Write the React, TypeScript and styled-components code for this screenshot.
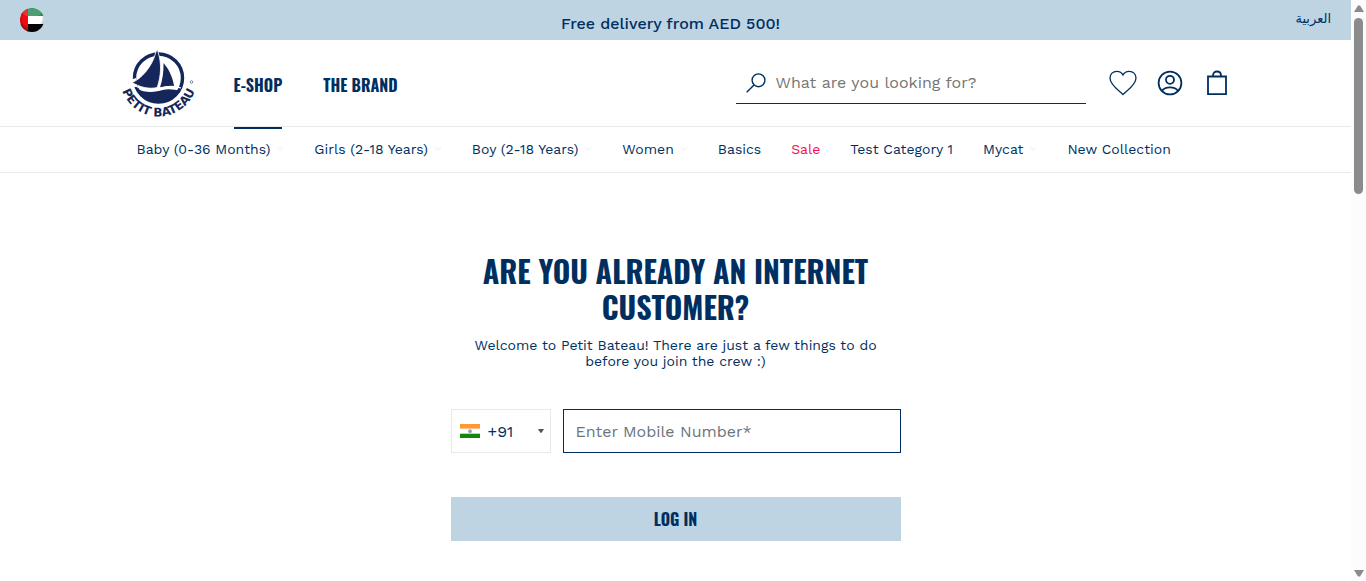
import React from "react";
import styled, { createGlobalStyle } from "styled-components";

const navy = "#002f5f";
const sky = "#bed4e3";
const line = "#e9e9e9";
const body = '"Work Sans", "Noto Sans", "Liberation Sans", sans-serif';
const display = '"Oswald", "Liberation Sans Narrow", "DejaVu Sans Condensed", sans-serif';

const GlobalStyle = createGlobalStyle`
  *, *::before, *::after { box-sizing: border-box; }
  body { margin: 0; background: #fff; color: ${navy}; font-family: ${body}; }
  h1, p, ul { margin: 0; padding: 0; }
  a { color: inherit; text-decoration: none; }
  button, input, select { font: inherit; color: inherit; }
`;

const Shell = styled.div`
  display: flex;
  height: 100vh;
  overflow: hidden;
`;

const Page = styled.div`
  flex: 1;
  min-width: 0;
`;

const TopBar = styled.div`
  display: grid;
  grid-template-columns: 1fr auto 1fr;
  align-items: center;
  height: 40px;
  padding: 0 20px;
  background: ${sky};
`;

const IconButton = styled.button`
  display: flex;
  justify-content: center;
  min-width: 28px;
  padding: 0;
  border: 0;
  background: none;
  cursor: pointer;
`;

const CountryButton = styled(IconButton)`
  justify-self: start;
  justify-content: flex-start;
`;

const Promo = styled.p`
  padding: 8px 10px 0 0;
  font-size: 16px;
  font-weight: 500;
  line-height: 24px;
`;

const Language = styled.a`
  justify-self: end;
  padding-bottom: 2px;
  font: 13px/20px "Liberation Serif", "DejaVu Sans", serif;
`;

const Container = styled.div`
  display: flex;
  width: 100%;
  max-width: 1110px;
  margin: 0 auto;
`;

const Header = styled.header`
  border-bottom: 1px solid ${line};
`;

const HeaderRow = styled(Container)`
  height: 86px;
  align-items: center;
`;

const LogoLink = styled.a`
  display: flex;
`;

const MainNav = styled.nav`
  display: flex;
  flex: 1;
  gap: 41px;
  align-self: flex-start;
  margin-left: 37px;
`;

const MainLink = styled.a<{ $active?: boolean }>`
  height: 89px;
  padding-top: 33px;
  border-bottom: 2px solid ${(p) => (p.$active ? navy : "transparent")};
  font: 700 16px/24px ${display};
`;

const Search = styled.label`
  display: flex;
  align-items: center;
  gap: 10px;
  width: 350px;
  height: 42px;
  padding-left: 10px;
  border-bottom: 1px solid ${navy};
`;

const SearchInput = styled.input`
  flex: 1;
  min-width: 0;
  padding: 0;
  border: 0;
  outline: 0;
  background: none;
  font-size: 16px;
  &::placeholder { color: #757575; opacity: 1; }
`;

const Actions = styled.div`
  display: flex;
  align-items: center;
  gap: 19px;
  margin-left: 23px;
`;

const CategoryBar = styled.nav`
  border-bottom: 1px solid ${line};
`;

const CategoryList = styled.ul`
  display: flex;
  width: 100%;
  max-width: 1078px;
  height: 45px;
  margin: 0 auto;
  padding-bottom: 2px;
  align-items: center;
  gap: 30px;
  list-style: none;
`;

const CategoryLink = styled.a<{ $sale?: boolean }>`
  display: flex;
  align-items: center;
  gap: 6px;
  color: ${(p) => (p.$sale ? "#f0134d" : navy)};
  font-size: 14px;
  line-height: 20px;
  white-space: nowrap;
`;

const Login = styled.main`
  width: 450px;
  max-width: 100%;
  margin: 0 auto;
  padding-top: 80px;
  text-align: center;
`;

const Title = styled.h1`
  font: 700 30px/36px ${display};
`;

const Intro = styled.p`
  padding: 12px 16px 0;
  font-size: 14px;
  line-height: 16px;
`;

const PhoneRow = styled.div`
  display: flex;
  gap: 12px;
  margin: 40px 0 44px;
`;

const CodeBox = styled.label`
  display: flex;
  align-items: center;
  width: 100px;
  height: 44px;
  padding: 0 6px 0 8px;
  border: 1px solid ${line};
`;

const CodeSelect = styled.select`
  flex: 1;
  min-width: 0;
  padding: 0 0 0 8px;
  border: 0;
  outline: 0;
  appearance: none;
  background: none;
  font-size: 16px;
`;

const PhoneInput = styled.input`
  flex: 1;
  min-width: 0;
  height: 44px;
  padding: 0 12px;
  border: 1px solid ${navy};
  border-radius: 0;
  outline: 0;
  font-size: 16px;
  &::placeholder { color: #6c757d; opacity: 1; }
`;

const Submit = styled.button`
  width: 100%;
  height: 44px;
  border: 0;
  background: ${sky};
  font: 700 16px/24px ${display};
  cursor: pointer;
`;

const ScrollTrack = styled.div`
  display: flex;
  flex-direction: column;
  align-items: center;
  width: 15px;
  padding: 5px 0 4px;
  background: #fcfcfc;
`;

const ScrollThumb = styled.div`
  width: 9px;
  height: 176px;
  margin: 6px 0 auto;
  border-radius: 5px;
  background: #8b8b8b;
`;

const categories = [
  { name: "Baby (0-36 Months)", menu: true },
  { name: "Girls (2-18 Years)", menu: true },
  { name: "Boy (2-18 Years)", menu: true },
  { name: "Women", menu: true },
  { name: "Basics" },
  { name: "Sale", sale: true },
  { name: "Test Category 1" },
  { name: "Mycat", menu: true },
  { name: "New Collection" },
];

const UaeFlag = () => (
  <svg width="24" height="24" viewBox="0 0 24 24" aria-hidden="true">
    <defs>
      <clipPath id="uae"><circle cx="12" cy="12" r="12" /></clipPath>
      <radialGradient id="gloss" cx=".5" cy=".4" r=".62">
        <stop offset=".65" stopColor="#000" stopOpacity="0" />
        <stop offset="1" stopColor="#000" stopOpacity=".45" />
      </radialGradient>
    </defs>
    <g clipPath="url(#uae)">
      <path fill="#fff" d="M0 0h24v24H0z" />
      <path fill="#2f8f5b" d="M0 0h24v8H0z" />
      <path fill="#050505" d="M0 16h24v8H0z" />
      <path fill="#ee0c12" d="M0 0h8v24H0z" />
      <path fill="url(#gloss)" d="M0 0h24v24H0z" />
      <ellipse cx="12" cy="5" rx="9" ry="4" fill="#fff" opacity=".15" />
    </g>
  </svg>
);

const Logo = () => (
  <svg width="76" height="76" viewBox="-1 -4 76 76" overflow="visible" role="img" aria-label="Petit Bateau">
    <circle cx="36.500" cy="29" r="24" fill="none" stroke="#14265a" strokeWidth="3.400" />
    <path fill="#fff" d="M8 31l6-2 1 8-4 2z" />
    <path fill="#14265a" stroke="#fff" strokeWidth=".8" d="M35.200 0l1 3.500c3.500 11 3 23-1 35-8 2-18-.5-25-5C19 30 30 18 33.600 4z" />
    <path fill="#14265a" d="M41.500 14c5.500 6 9.500 15 10.800 24-5-1.400-9-.9-14.300.6 2.700-8 3.700-16 3.500-24.600z" />
    <path fill="#14265a" d="M13.500 39c12 6.500 21 3.500 27 2 6-1.400 12-.5 18 1-5 8-13 10.800-22 10.800S18 48 13.500 39z" />
    <path fill="none" stroke="#fff" strokeWidth="1.300" d="M10 35c10 6.500 20 6 27 4.300 7-2 14-3.300 22-.3" />
    <path id="logo-arc" fill="none" d="M-2 29a38.500 38.500 0 0 0 77 0" />
    <text fill="#14265a" fontFamily="DejaVu Sans, sans-serif" fontSize="12" fontWeight="700" textAnchor="middle">
      <textPath href="#logo-arc" startOffset="50%">PETIT BATEAU</textPath>
    </text>
    <circle cx="69.500" cy="33" r="1.300" fill="none" stroke="#14265a" strokeWidth=".5" />
  </svg>
);

const SearchIcon = () => (
  <svg width="20" height="20" viewBox="0 0 20 20" fill="none" stroke={navy} strokeWidth="1.400" aria-hidden="true">
    <circle cx="12.500" cy="7.300" r="6.400" />
    <path d="M8 12L.7 19.300" />
  </svg>
);

const HeartIcon = () => (
  <svg width="28" height="26" viewBox="0 0 28 26" fill="none" stroke={navy} strokeWidth="1.300" aria-hidden="true">
    <path d="M14 24.500C10 20.500 1 15 1 8 1 4 4 1.300 7.700 1.300c2.800 0 5.200 1.500 6.300 3.700 1.100-2.200 3.500-3.700 6.300-3.700C24 1.300 27 4 27 8c0 7-9 12.500-13 16.500z" />
  </svg>
);

const AccountIcon = () => (
  <svg width="26" height="26" viewBox="0 0 26 26" fill="none" stroke={navy} strokeWidth="1.800" aria-hidden="true">
    <circle cx="13" cy="13" r="11.400" />
    <circle cx="13" cy="9.800" r="4" />
    <path d="M5 21c1.500-2.400 4.500-3.700 8-3.700s6.500 1.300 8 3.700" />
  </svg>
);

const BagIcon = () => (
  <svg width="20" height="26" viewBox="0 0 20 26" fill="none" stroke={navy} strokeWidth="1.800" aria-hidden="true">
    <path d="M1 6.500h18v17.600H1zM6 6.500v-1C6 3 7.500 1.500 10 1.500S14 3 14 5.500v1" />
  </svg>
);

const Chevron = () => (
  <svg width="8" height="5" viewBox="0 0 8 5" fill="none" stroke="#f8f3f6" strokeWidth="1.500" aria-hidden="true">
    <path d="M1 1l3 3 3-3" />
  </svg>
);

const IndiaFlag = () => (
  <svg width="20" height="14" viewBox="0 0 20 14" aria-hidden="true">
    <path fill="#fff" d="M0 0h20v14H0z" />
    <path fill="#ff9933" d="M0 0h20v4.600H0z" />
    <path fill="#128807" d="M0 9.700h20V14H0z" />
    <circle cx="10" cy="7.200" r="1.900" fill="#9a9ad2" />
  </svg>
);

const Triangle = ({ size, up }: { size: "small" | "large"; up?: boolean }) => {
  const w = size === "small" ? 6 : 10;
  const h = size === "small" ? 4 : 7;
  return (
    <svg width={w} height={h} viewBox="0 0 10 7" preserveAspectRatio="none" aria-hidden="true">
      <path fill={size === "small" ? "#555" : "#8b8b8b"} d={up ? "M0 7L4 .5h2L10 7z" : "M0 0h10L6 6.500H4z"} />
    </svg>
  );
};

export default function App() {
  return (
    <>
      <GlobalStyle />
      <Shell>
        <Page>
          <TopBar>
            <CountryButton aria-label="Country: United Arab Emirates"><UaeFlag /></CountryButton>
            <Promo>Free delivery from AED 500!</Promo>
            <Language href="#ar" lang="ar" dir="rtl">العربية</Language>
          </TopBar>
          <Header>
            <HeaderRow>
              <LogoLink href="#home"><Logo /></LogoLink>
              <MainNav aria-label="Main">
                <MainLink href="#shop" $active>E-SHOP</MainLink>
                <MainLink href="#brand">THE BRAND</MainLink>
              </MainNav>
              <Search>
                <SearchIcon />
                <SearchInput type="text" aria-label="Search" placeholder="What are you looking for?" />
              </Search>
              <Actions>
                <IconButton aria-label="Wishlist"><HeartIcon /></IconButton>
                <IconButton aria-label="Account"><AccountIcon /></IconButton>
                <IconButton aria-label="Bag"><BagIcon /></IconButton>
              </Actions>
            </HeaderRow>
          </Header>
          <CategoryBar aria-label="Categories">
            <CategoryList>
              {categories.map((c) => (
                <li key={c.name}>
                  <CategoryLink href="#category" $sale={c.sale}>
                    {c.name}
                    {c.menu && <Chevron />}
                  </CategoryLink>
                </li>
              ))}
            </CategoryList>
          </CategoryBar>
          <Login>
            <Title>ARE YOU ALREADY AN INTERNET CUSTOMER?</Title>
            <Intro>Welcome to Petit Bateau! There are just a few things to do before you join the crew :)</Intro>
            <PhoneRow>
              <CodeBox>
                <IndiaFlag />
                <CodeSelect aria-label="Country code"><option>+91</option></CodeSelect>
                <Triangle size="small" />
              </CodeBox>
              <PhoneInput type="tel" aria-label="Mobile number" placeholder="Enter Mobile Number*" />
            </PhoneRow>
            <Submit>LOG IN</Submit>
          </Login>
        </Page>
        <ScrollTrack aria-hidden="true">
          <Triangle size="large" up />
          <ScrollThumb />
          <Triangle size="large" />
        </ScrollTrack>
      </Shell>
    </>
  );
}
